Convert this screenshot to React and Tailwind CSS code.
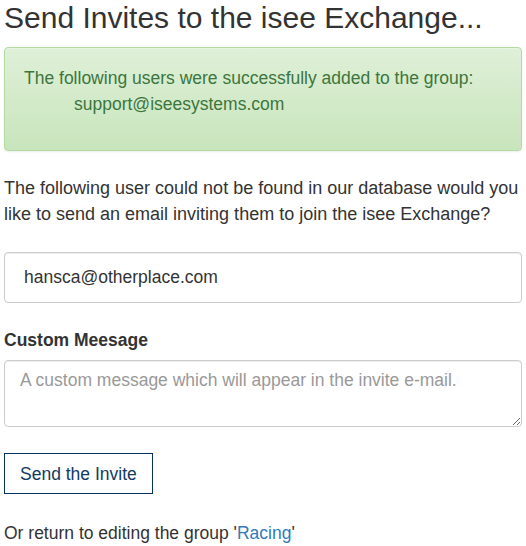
export default function App() {
  return (
    <div className="w-[526px] h-[546px] overflow-hidden bg-white px-[4px] font-['Liberation_Sans',Arial,sans-serif] text-[17.5px] leading-[26px] text-[#333]">
      <h1 className="pt-[1px] text-[30px] leading-[33px] font-normal text-[#333]">
        Send Invites to the isee Exchange...
      </h1>
      <div className="mt-[13px] h-[104px] rounded-[4px] border border-[#b2dba1] bg-linear-to-b from-[#dff0d8] to-[#c8e5bc] px-[19px] pt-[17px] text-[#3c763d] shadow-[inset_0_1px_0_rgba(255,255,255,0.25),0_1px_2px_rgba(0,0,0,0.08)]">
        <div>The following users were successfully added to the group:</div>
        <div className="pl-[50px]">support@iseesystems.com</div>
      </div>
      <p className="mt-[24px] text-[18px]">
        The following user could not be found in our database would you like to send an email inviting them to join the isee Exchange?
      </p>
      <input
        type="text"
        defaultValue="hansca@otherplace.com"
        className="mt-[25px] block h-[51px] w-full rounded-[4px] border border-[#ccc] px-[19px] text-[17.5px] text-[#333] shadow-[inset_0_1px_1px_rgba(0,0,0,0.075)] outline-none"
      />
      <label className="mt-[24px] block h-[26px] font-bold">Custom Meesage</label>
      <textarea
        placeholder="A custom message which will appear in the invite e-mail."
        className="mt-[7px] block h-[67px] w-full rounded-[4px] border border-[#ccc] px-[15px] pt-[6px] text-[17.5px] leading-[26px] text-[#333] placeholder:text-[#999] shadow-[inset_0_1px_1px_rgba(0,0,0,0.075)] outline-none"
      />
      <button className="mt-[26px] block h-[41px] w-[149px] border border-[#06325f] bg-white pl-[15px] text-left text-[17.5px] text-[#123a63]">
        Send the Invite
      </button>
      <p className="mt-[26px]">
        Or return to editing the group '<a href="#" className="text-[#337ab7]">Racing</a>'
      </p>
    </div>
  );
}
